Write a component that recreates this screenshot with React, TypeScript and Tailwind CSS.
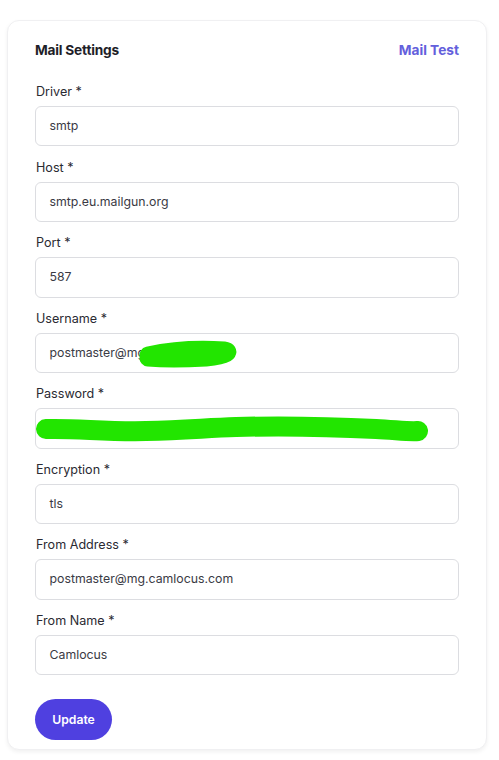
import React from "react";

const fields: { label: string; value: string; scribble?: "user" | "pass" }[] = [
  { label: "Driver *", value: "smtp" },
  { label: "Host *", value: "smtp.eu.mailgun.org" },
  { label: "Port *", value: "587" },
  { label: "Username *", value: "postmaster@mg", scribble: "user" },
  { label: "Password *", value: "", scribble: "pass" },
  { label: "Encryption *", value: "tls" },
  { label: "From Address *", value: "postmaster@mg.camlocus.com" },
  { label: "From Name *", value: "Camlocus" },
];

function Field({ label, value, scribble }: { label: string; value: string; scribble?: "user" | "pass" }) {
  return (
    <div className="flex flex-col">
      <div className="h-5 text-[12.6px] leading-5 font-normal text-[#2a2a32] pl-[1px]">{label}</div>
      <div className="relative mt-1 h-[40.4px] rounded-[6px] border border-[#dcdde1] bg-white flex items-center px-[13.5px] text-[12.3px] text-[#3a3a44]">
        {value}
        {scribble === "user" && (
          <svg className="absolute left-0 top-0" width="425" height="40" viewBox="0 0 425 40">
            <path d="M112 21 C 135 16, 160 14, 188 16 C 196 17, 192 22, 170 24 C 150 25, 125 25, 112 24" stroke="#22e500" strokeWidth="17" strokeLinecap="round" strokeLinejoin="round" fill="none" />
          </svg>
        )}
        {scribble === "pass" && (
          <svg className="absolute left-0 top-0" width="425" height="40" viewBox="0 0 425 40">
            <path d="M10 20 C 40 19, 70 23, 110 22 C 150 21, 170 19, 200 18 C 240 17, 300 18, 340 20 C 360 21, 375 23, 382 22" stroke="#22e500" strokeWidth="20" strokeLinecap="round" strokeLinejoin="round" fill="none" />
          </svg>
        )}
      </div>
    </div>
  );
}

export default function App() {
  return (
    <div className="min-h-screen bg-white pt-[20px] pl-[7px]" style={{ fontFamily: "Inter, 'Noto Sans', sans-serif" }}>
      <div className="w-[480px] rounded-[12px] border border-[#f0f0f2] bg-white shadow-[0_2px_4px_rgba(0,0,0,0.06)] px-[27px] pt-[19px] pb-[9px]">
        <div className="flex items-center justify-between h-5">
          <div className="text-[13.7px] font-bold text-[#1e1e28] tracking-[-0.2px]">Mail Settings</div>
          <div className="text-[13.7px] font-bold text-[#6360dc]">Mail Test</div>
        </div>
        <div className="mt-[22px] flex flex-col gap-[11.2px]">
          {fields.map((f) => (
            <Field key={f.label} {...f} />
          ))}
        </div>
        <button className="mt-[24px] h-[41px] w-[77px] rounded-full bg-[#4f40e0] text-white text-[12.2px] font-semibold">
          Update
        </button>
      </div>
    </div>
  );
}
